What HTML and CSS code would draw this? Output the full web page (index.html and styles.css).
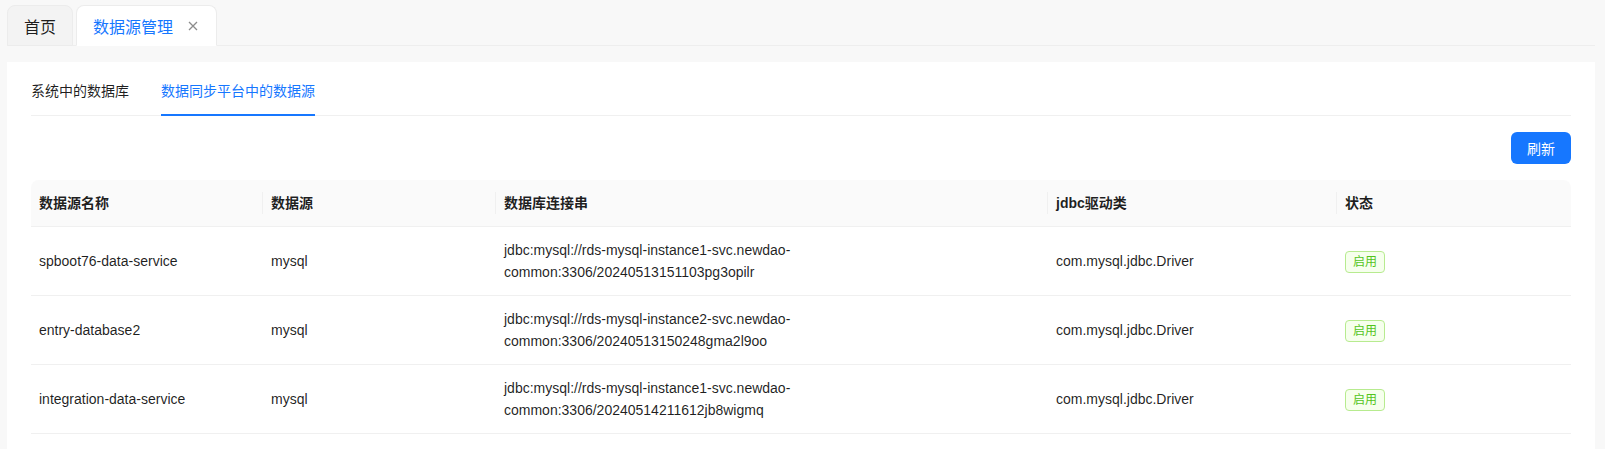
FILE: index.html
```html
<!DOCTYPE html>
<html lang="zh-CN">
<head>
    <meta charset="UTF-8">
    <meta name="viewport" content="width=device-width, initial-scale=1.0">
    <title>数据源管理</title>
    <link rel="stylesheet" href="styles.css">
</head>
<body>
    <div class="page">
        <div class="top-tabs">
            <div class="top-tab">首页</div>
            <div class="top-tab active">
                数据源管理
                <svg class="close-icon" width="10" height="10" viewBox="0 0 10 10">
                    <path d="M1 1L9 9M9 1L1 9" stroke="#8c8c8c" stroke-width="1.3" fill="none"/>
                </svg>
            </div>
        </div>

        <div class="card">
            <div class="sub-tabs">
                <div class="sub-tab">系统中的数据库</div>
                <div class="sub-tab active">数据同步平台中的数据源</div>
            </div>

            <div class="toolbar">
                <button class="refresh-btn">刷新</button>
            </div>

            <table class="ds-table">
                <colgroup>
                    <col style="width: 232px">
                    <col style="width: 233px">
                    <col style="width: 552px">
                    <col style="width: 289px">
                    <col style="width: 234px">
                </colgroup>
                <thead>
                    <tr>
                        <th>数据源名称</th>
                        <th>数据源</th>
                        <th>数据库连接串</th>
                        <th>jdbc驱动类</th>
                        <th>状态</th>
                    </tr>
                </thead>
                <tbody>
                    <tr>
                        <td>spboot76-data-service</td>
                        <td>mysql</td>
                        <td>jdbc:mysql://rds-mysql-instance1-svc.newdao-<br>common:3306/20240513151103pg3opilr</td>
                        <td>com.mysql.jdbc.Driver</td>
                        <td><span class="tag">启用</span></td>
                    </tr>
                    <tr>
                        <td>entry-database2</td>
                        <td>mysql</td>
                        <td>jdbc:mysql://rds-mysql-instance2-svc.newdao-<br>common:3306/20240513150248gma2l9oo</td>
                        <td>com.mysql.jdbc.Driver</td>
                        <td><span class="tag">启用</span></td>
                    </tr>
                    <tr>
                        <td>integration-data-service</td>
                        <td>mysql</td>
                        <td>jdbc:mysql://rds-mysql-instance1-svc.newdao-<br>common:3306/20240514211612jb8wigmq</td>
                        <td>com.mysql.jdbc.Driver</td>
                        <td><span class="tag">启用</span></td>
                    </tr>
                </tbody>
            </table>
        </div>
    </div>
</body>
</html>
```

FILE: styles.css
```css
* {
    margin: 0;
    padding: 0;
    box-sizing: border-box;
}

body {
    font-family: "Liberation Sans", "Noto Sans CJK SC", sans-serif;
    font-size: 14px;
    color: rgba(0, 0, 0, 0.88);
    background: #f5f5f5;
}

.page {
    padding: 5px 10px 0 7px;
    background: #f8f8f8;
}

.top-tabs {
    display: flex;
    gap: 3px;
    border-bottom: 1px solid #eeeeee;
}

.top-tab {
    display: flex;
    align-items: center;
    height: 41px;
    margin-bottom: -1px;
    padding: 0 16px;
    font-size: 16px;
    color: rgba(0, 0, 0, 0.88);
    background: #f3f3f3;
    border: 1px solid #ececec;
    border-radius: 8px 8px 0 0;
}

.top-tab.active {
    color: #1677ff;
    background: #fff;
    border-bottom-color: #fff;
    padding-right: 18px;
}

.close-icon {
    margin-left: 15px;
}

.card {
    margin-top: 16px;
    background: #fff;
    padding: 6px 24px 20px;
}

.sub-tabs {
    display: flex;
    gap: 32px;
    border-bottom: 1px solid #f0f0f0;
}

.sub-tab {
    padding: 12px 0;
    line-height: 22px;
    margin-bottom: -1px;
    border-bottom: 2px solid transparent;
}

.sub-tab.active {
    color: #1677ff;
    border-bottom-color: #1677ff;
}

.toolbar {
    display: flex;
    justify-content: flex-end;
    margin: 16px 0;
}

.refresh-btn {
    width: 60px;
    height: 32px;
    border: none;
    border-radius: 6px;
    background: #1677ff;
    color: #fff;
    font-family: inherit;
    font-size: 14px;
    cursor: pointer;
}

.ds-table {
    width: 100%;
    table-layout: fixed;
    border-collapse: separate;
    border-spacing: 0;
}

.ds-table th {
    position: relative;
    text-align: left;
    font-weight: 600;
    background: #fafafa;
    padding: 12px 8px;
    line-height: 22px;
    border-bottom: 1px solid #f0f0f0;
}

.ds-table th:first-child {
    border-top-left-radius: 8px;
}

.ds-table th:last-child {
    border-top-right-radius: 8px;
}

.ds-table th:not(:last-child)::before {
    content: "";
    position: absolute;
    right: 0;
    top: 50%;
    width: 1px;
    height: 22px;
    transform: translateY(-50%);
    background: #f0f0f0;
}

.ds-table td {
    padding: 12px 8px;
    line-height: 22px;
    border-bottom: 1px solid #f0f0f0;
}

.tag {
    display: inline-block;
    padding: 0 7px;
    font-size: 12px;
    line-height: 20px;
    color: #52c41a;
    background: #f6ffed;
    border: 1px solid #b7eb8f;
    border-radius: 4px;
}
```
